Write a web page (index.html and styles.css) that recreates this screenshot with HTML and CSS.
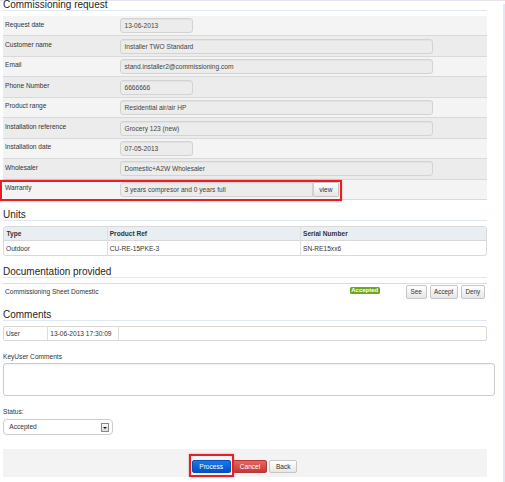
FILE: index.html
```html
<!DOCTYPE html>
<html>
<head>
<meta charset="utf-8">
<link rel="stylesheet" href="styles.css">
</head>
<body>
<div class="page">
  <h2 class="sect first">Commissioning request</h2>
  <div class="details">
    <div class="row"><div class="lbl">Request date</div><div class="val"><span class="inp short">13-06-2013</span></div></div>
    <div class="row"><div class="lbl">Customer name</div><div class="val"><span class="inp long">Installer TWO Standard</span></div></div>
    <div class="row"><div class="lbl">Email</div><div class="val"><span class="inp long">stand.installer2@commissioning.com</span></div></div>
    <div class="row"><div class="lbl">Phone Number</div><div class="val"><span class="inp short">6666666</span></div></div>
    <div class="row"><div class="lbl">Product range</div><div class="val"><span class="inp long">Residential air/air HP</span></div></div>
    <div class="row"><div class="lbl">Installation reference</div><div class="val"><span class="inp long">Grocery 123 (new)</span></div></div>
    <div class="row"><div class="lbl">Installation date</div><div class="val"><span class="inp short">07-05-2013</span></div></div>
    <div class="row"><div class="lbl">Wholesaler</div><div class="val"><span class="inp long">Domestic+A2W Wholesaler</span></div></div>
    <div class="row warranty"><div class="lbl">Warranty</div><div class="val"><span class="inp mid">3 years compresor and 0 years full</span><span class="btn view">view</span></div><div class="hl hl-row"></div></div>
  </div>

  <h2 class="sect">Units</h2>
  <div class="grid units">
    <div class="cell th">Type</div><div class="cell th">Product Ref</div><div class="cell th">Serial Number</div>
    <div class="cell">Outdoor</div><div class="cell">CU-RE-15PKE-3</div><div class="cell">SN-RE15xx6</div>
  </div>

  <h2 class="sect">Documentation provided</h2>
  <div class="doc">
    <div class="doc-name">Commissioning Sheet Domestic</div>
    <span class="badge">Accepted</span>
    <span class="btn small see">See</span>
    <span class="btn small accept">Accept</span>
    <span class="btn small deny">Deny</span>
  </div>

  <h2 class="sect">Comments</h2>
  <div class="grid comments">
    <div class="cell">User</div><div class="cell">13-06-2013 17:30:09</div><div class="cell"></div>
  </div>

  <div class="flabel key">KeyUser Comments</div>
  <div class="textarea"></div>

  <div class="flabel status">Status:</div>
  <div class="select">Accepted<span class="arrow"></span></div>

  <div class="footer">
    <span class="btn big primary">Process<span class="hl hl-btn"></span></span>
    <span class="btn big danger">Cancel</span>
    <span class="btn big plain">Back</span>
  </div>
</div>
</body>
</html>
```

FILE: styles.css
```css
* { box-sizing: border-box; }
html {
  background:
    linear-gradient(#e6e6e6, #e6e6e6) left top / 100% 1px no-repeat,
    linear-gradient(#dfeaf6, #dfeaf6) right 0 top 4px / 2px 100% no-repeat,
    #ffffff;
}
body {
  margin: 0;
  font-family: "Liberation Sans", Arial, sans-serif;
  font-size: 6.6px;
  color: #333;
}
.page {
  width: 503px;
  height: 482px;
  padding-left: 3px;
  overflow: hidden;
}
.sect {
  width: 484px;
  margin: 10.5px 0 5px;
  font-size: 10px;
  line-height: 10px;
  font-weight: normal;
  color: #1e1e1e;
  border-bottom: 1px solid #dde9f5;
}
.sect.first { margin-top: 0; }

/* details table */
.details { width: 484px; }
.row {
  position: relative;
  display: flex;
  height: 20.44px;
  border-bottom: 1px solid #d9d9d9;
  background: #f4f4f4;
}
.row:nth-child(even) { background: #ececec; }
.lbl {
  width: 117px;
  padding: 3.5px 0 0 2px;
  line-height: 9px;
  color: #333;
}
.val {
  display: flex;
  padding-top: 2.4px;
}
.inp {
  display: block;
  height: 15px;
  border: 1px solid #d3d3d3;
  border-radius: 3px;
  background: #ececec;
  box-shadow: inset 0 1px 1px rgba(0, 0, 0, 0.04);
  padding: 0 3.5px;
  line-height: 13px;
  color: #444;
  white-space: nowrap;
  overflow: hidden;
}
.inp.short { width: 72.7px; }
.inp.long { width: 312.7px; }
.inp.mid { width: 192.7px; border-radius: 3px 0 0 3px; }

.btn {
  display: inline-flex;
  align-items: center;
  justify-content: center;
  border: 1px solid #c6c6c6;
  border-radius: 2px;
  background: linear-gradient(#ffffff, #e6e6e6);
  color: #333;
  white-space: nowrap;
}
.view {
  width: 26.3px;
  height: 14.6px;
  margin-top: 0.3px;
  border-radius: 0 2px 2px 0;
  border-left-color: #d0d0d0;
}
.hl {
  position: absolute;
  border: 2px solid #ec1c24;
  box-shadow: 0 0 2px rgba(120, 0, 0, 0.35);
  pointer-events: none;
}
.hl-row {
  left: -2.6px;
  top: 0;
  width: 341.4px;
  height: 21px;
}

/* grid tables */
.grid {
  display: grid;
  width: 484px;
  border: 1px solid #d9d9d9;
  border-radius: 3px;
  overflow: hidden;
  background: #fff;
}
.cell {
  padding: 0 2px;
  white-space: nowrap;
  display: flex;
  align-items: center;
}
.units { grid-template-columns: 102.7px 193.3px 1fr; }
.units .cell { height: 14px; }
.units .cell:nth-child(3n+2),
.units .cell:nth-child(3n) { border-left: 1px solid #dedede; }
.units .th {
  background: #e9eef3;
  border-bottom: 1px solid #d9d9d9;
  font-weight: bold;
  color: #333;
}
.units .cell:nth-child(1) { padding-left: 2.5px; }

.comments { grid-template-columns: 43.3px 71px 1fr; height: 14.5px; border-radius: 2px; }
.comments .cell { height: 12.5px; }
.comments .cell + .cell { border-left: 1px solid #dedede; }

/* documentation row */
.doc {
  width: 484px;
  height: 17px;
  border-top: 1px solid #dddddd;
  display: flex;
  align-items: flex-start;
  padding-right: 2px;
}
.doc-name {
  flex: 1;
  padding: 2.8px 0 0 2px;
  line-height: 9px;
}
.badge {
  margin-top: 2.7px;
  margin-right: 25.7px;
  width: 30.5px;
  height: 7px;
  line-height: 7px;
  text-align: center;
  font-size: 6px;
  font-weight: bold;
  color: #fff;
  background: #6aa81f;
  border-radius: 1.5px;
}
.btn.small {
  height: 13.4px;
  margin-top: 1.3px;
  margin-left: 3px;
  font-size: 6.3px;
}
.see { width: 21px; margin-left: 0 !important; }
.accept { width: 28px; }
.deny { width: 24.3px; }

/* form fields */
.flabel {
  line-height: 9px;
  color: #333;
}
.flabel.key { margin-top: 11.2px; }
.flabel.status { margin-top: 10.2px; }
.textarea {
  margin-top: 2.3px;
  width: 492px;
  height: 33px;
  margin-left: -0.3px;
  border: 1px solid #cccccc;
  border-radius: 3px;
  background: #fff;
  box-shadow: inset 0 1px 1px rgba(0, 0, 0, 0.05);
}
.select {
  position: relative;
  margin-top: 3.8px;
  width: 109.7px;
  height: 15.7px;
  border: 1px solid #cccccc;
  border-radius: 4px;
  padding-left: 5.3px;
  line-height: 13.7px;
  color: #333;
  background: #fff;
}
.arrow {
  position: absolute;
  left: 96.7px;
  top: 2.3px;
  width: 8.4px;
  height: 9.4px;
  border: 1px solid #8a8a8a;
  background: linear-gradient(#fafafa, #dcdcdc);
}
.arrow::after {
  content: "";
  position: absolute;
  left: 1.7px;
  top: 3px;
  border-left: 2.2px solid transparent;
  border-right: 2.2px solid transparent;
  border-top: 2.4px solid #111;
}

/* footer */
.footer {
  margin-top: 14.3px;
  width: 484px;
  height: 28px;
  background: #f3f3f3;
  display: flex;
  gap: 2px;
  padding: 11px 0 0 188.7px;
}
.btn.big {
  position: relative;
  height: 13px;
  font-size: 6.6px;
}
.primary {
  width: 39px;
  color: #fff;
  border-color: #0a4fb8;
  background: linear-gradient(#1a7ae6, #0050cc);
}
.danger {
  width: 34.6px;
  color: #fff;
  border-color: #b23a33;
  background: linear-gradient(#ee625d, #c03a33);
}
.plain { width: 28px; }
.hl-btn {
  left: -3.4px;
  top: -7px;
  width: 44.4px;
  height: 23px;
}
```
